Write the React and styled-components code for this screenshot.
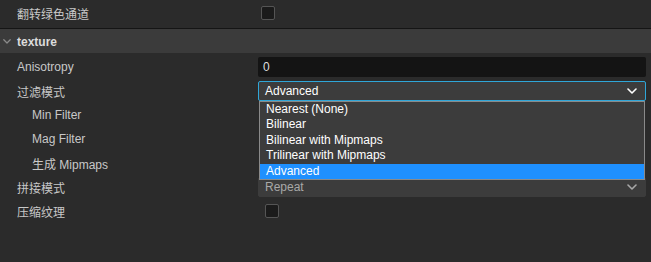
import React from "react";
import styled, { createGlobalStyle } from "styled-components";

const Global = createGlobalStyle`
  html, body { margin: 0; padding: 0; background: #2b2b2b; }
  body {
    font-family: "Liberation Sans", Arial, "Noto Sans CJK SC", sans-serif;
    font-size: 12px;
    color: #c8c8c8;
    width: 651px;
    height: 262px;
    overflow: hidden;
  }
`;

const Panel = styled.div`
  width: 651px;
  height: 262px;
  background: #2b2b2b;
`;

const Row = styled.div`
  display: flex;
  align-items: center;
  height: ${(p) => p.$h || 24}px;
  box-sizing: border-box;
  ${(p) => (p.$divider ? "border-bottom: 1px solid #151515; padding-bottom: 2px;" : "")}
`;

const Label = styled.div`
  width: 258px;
  box-sizing: border-box;
  padding-left: ${(p) => (p.$sub ? 32 : 17)}px;
  color: #c8c8c8;
  white-space: nowrap;
  font-family: "Liberation Sans", Arial, "Noto Sans CJK SC", sans-serif;
`;

const Value = styled.div`
  position: relative;
  flex: 1;
  padding-right: 5px;
  display: flex;
  align-items: center;
  height: 20px;
`;

const Checkbox = styled.div`
  width: 12px;
  height: 12px;
  margin-left: ${(p) => p.$offset || 3}px;
  background: #1b1b1b;
  border: 1px solid #555;
  border-radius: 2px;
`;

const Header = styled.div`
  display: flex;
  align-items: center;
  height: 24px;
  background: #3b3b3b;
  color: #dcdcdc;
  font-weight: bold;
  gap: 6px;
  padding-left: 3px;
  padding-top: 1px;
  box-sizing: border-box;
`;

const Content = styled.div`
  padding-top: 2px;
`;

const Input = styled.div`
  flex: 1;
  height: 20px;
  box-sizing: border-box;
  background: #141414;
  border-radius: 2px;
  padding-left: 5px;
  display: flex;
  align-items: center;
  color: #dddddd;
`;

const Select = styled.div`
  flex: 1;
  height: 20px;
  box-sizing: border-box;
  background: #3c3c3c;
  border: 1px solid ${(p) => (p.$focus ? "#2fa6d8" : "#3c3c3c")};
  border-radius: 2px;
  padding: 0 8px 0 6px;
  display: flex;
  align-items: center;
  justify-content: space-between;
  color: ${(p) => (p.$focus ? "#ffffff" : "#a8a8a8")};
`;

const Menu = styled.div`
  position: absolute;
  top: 20px;
  left: 1px;
  right: 6px;
  background: #3c3c3c;
  border: 1px solid #8a8a8a;
  z-index: 2;
`;

const Option = styled.div`
  height: 15.4px;
  line-height: 15.4px;
  padding-left: 6px;
  color: #ffffff;
  background: ${(p) => (p.$selected ? "#1e90ff" : "transparent")};
`;

const Chevron = ({ color = "#ffffff", size = 10 }) => (
  <svg width={size} height={size * 0.6} viewBox="0 0 10 6" fill="none">
    <path d="M1 1 L5 5 L9 1" stroke={color} strokeWidth="1.6" strokeLinecap="round" strokeLinejoin="round" />
  </svg>
);

const options = [
  "Nearest (None)",
  "Bilinear",
  "Bilinear with Mipmaps",
  "Trilinear with Mipmaps",
  "Advanced",
];

export default function App() {
  return (
    <Panel>
      <Global />
      <Row $h={29} $divider>
        <Label>翻转绿色通道</Label>
        <Value>
          <Checkbox $offset={3} />
        </Value>
      </Row>
      <Header>
        <Chevron color="#8a8a8a" size={8} />
        <span>texture</span>
      </Header>
      <Content>
        <Row>
          <Label>Anisotropy</Label>
          <Value>
            <Input>0</Input>
          </Value>
        </Row>
        <Row>
          <Label>过滤模式</Label>
          <Value>
            <Select $focus>
              <span>Advanced</span>
              <Chevron />
            </Select>
            <Menu>
              {options.map((o) => (
                <Option key={o} $selected={o === "Advanced"}>
                  {o}
                </Option>
              ))}
            </Menu>
          </Value>
        </Row>
        <Row>
          <Label $sub>Min Filter</Label>
        </Row>
        <Row>
          <Label $sub>Mag Filter</Label>
        </Row>
        <Row>
          <Label $sub>生成 Mipmaps</Label>
        </Row>
        <Row>
          <Label>拼接模式</Label>
          <Value>
            <Select>
              <span>Repeat</span>
              <Chevron color="#a8a8a8" />
            </Select>
          </Value>
        </Row>
        <Row>
          <Label>压缩纹理</Label>
          <Value>
            <Checkbox $offset={7} />
          </Value>
        </Row>
      </Content>
    </Panel>
  );
}
